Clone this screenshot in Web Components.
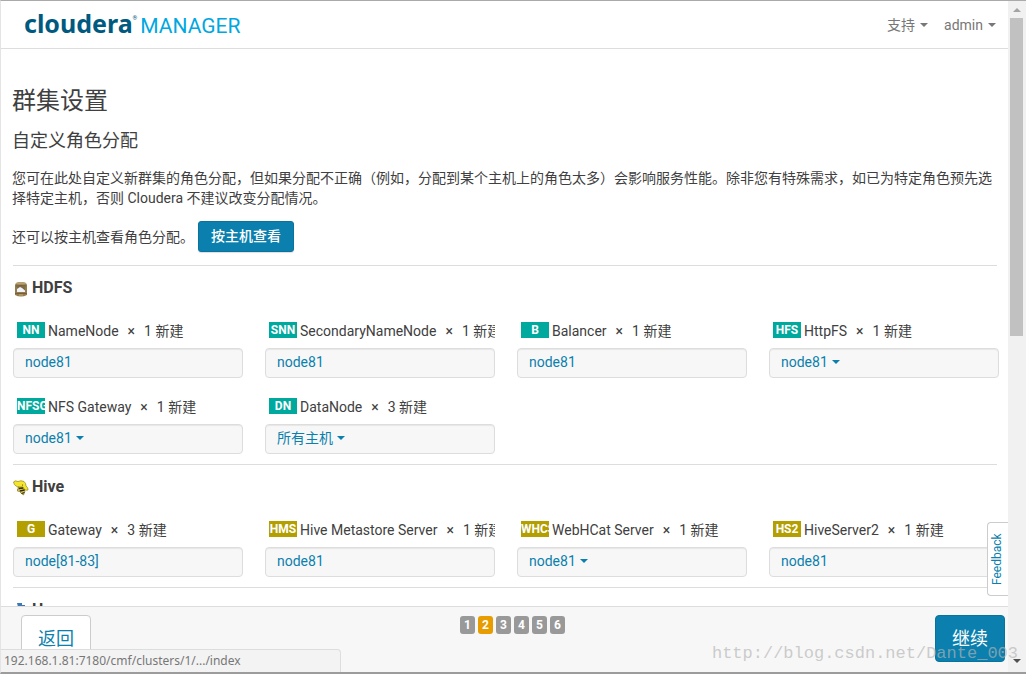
<!DOCTYPE html>
<html lang="zh-CN">
<head>
<meta charset="utf-8">
<title>群集设置 - Cloudera Manager</title>
<style>
  html, body { margin: 0; height: 100%; }
  body { overflow: hidden; font: 14px/20px Roboto, "Noto Sans CJK SC", sans-serif; color: #404040; background: #fff; }
</style>
</head>
<body>
<cm-window>
  <cm-header slot="header"></cm-header>
  <cm-intro></cm-intro>
  <cm-service name="HDFS" icon="hdfs" color="#00a99d">
    <cm-role abbr="NN" name="NameNode" count="1" host="node81"></cm-role>
    <cm-role abbr="SNN" name="SecondaryNameNode" count="1" host="node81"></cm-role>
    <cm-role abbr="B" name="Balancer" count="1" host="node81"></cm-role>
    <cm-role abbr="HFS" name="HttpFS" count="1" host="node81" menu></cm-role>
    <cm-role abbr="NFSG" name="NFS Gateway" count="1" host="node81" menu></cm-role>
    <cm-role abbr="DN" name="DataNode" count="3" host="所有主机" menu></cm-role>
  </cm-service>
  <cm-service name="Hive" icon="hive" color="#b3a000">
    <cm-role abbr="G" name="Gateway" count="3" host="node[81-83]"></cm-role>
    <cm-role abbr="HMS" name="Hive Metastore Server" count="1" host="node81"></cm-role>
    <cm-role abbr="WHCS" name="WebHCat Server" count="1" host="node81" menu></cm-role>
    <cm-role abbr="HS2" name="HiveServer2" count="1" host="node81"></cm-role>
  </cm-service>
  <cm-service name="Hue" icon="hue" color="#4a7fb5"></cm-service>
  <cm-feedback slot="overlay"></cm-feedback>
  <cm-footer slot="footer"></cm-footer>
  <cm-scrollbar slot="scrollbar"></cm-scrollbar>
  <cm-status slot="overlay">192.168.1.81:7180/cmf/clusters/1/.../index</cm-status>
  <cm-watermark slot="overlay">http://blog.csdn.net/Dante_003</cm-watermark>
</cm-window>
<script>
const define = (tag, html) => customElements.define(tag, class extends HTMLElement {
  connectedCallback() {
    if (this.shadowRoot) return;
    const root = this.attachShadow({ mode: 'open' });
    root.innerHTML = typeof html === 'function' ? html(this) : html;
  }
});

define('cm-window', `
<style>
  :host { display: grid; grid-template-columns: minmax(0, 1fr) 18px; height: 100vh; box-sizing: border-box; position: relative;
          border-top: 1px solid #aaa; border-left: 1px solid #e4e4e4; border-bottom: 2px solid #9c9c9c; overflow: hidden; }
  .page { display: flex; flex-direction: column; min-height: 0; }
  main { flex: 1; min-height: 0; overflow: hidden; padding: 0 11px 0 12px; }
</style>
<div class="page"><slot name="header"></slot><main><slot></slot></main><slot name="footer"></slot></div>
<slot name="scrollbar"></slot>
<slot name="overlay"></slot>`);

define('cm-caret', `
<style>:host { display: inline-block; border: 4px solid transparent; border-top-color: currentColor; border-bottom: 0; vertical-align: middle; }</style>`);

define('cm-header', `
<style>
  :host { display: flex; align-items: center; justify-content: space-between; height: 47px; border-bottom: 1px solid #ddd; padding: 0 12px 0 23px; }
  .logo { display: flex; align-items: baseline; text-decoration: none; color: #00a7e1; font: 21px/32px Roboto, sans-serif; }
  .logo b { font: 700 25px/32px "Noto Sans", sans-serif; color: #00597f; }
  .logo small { font-size: 6px; line-height: 6px; align-self: flex-start; margin: 8px 3px 0 0; color: #00597f; }
  nav { display: flex; gap: 16px; }
  button { all: unset; display: flex; align-items: center; gap: 5px; color: #777; cursor: pointer; }
</style>
<a class="logo" href="#"><b>cloudera</b><small>®</small><span>MANAGER</span></a>
<nav><button type="button">支持 <cm-caret></cm-caret></button><button type="button">admin <cm-caret></cm-caret></button></nav>`);

define('cm-intro', `
<style>
  :host { display: block; padding: 36px 0 13px; margin-left: -1px; }
  h1 { margin: 0; font-weight: 400; font-size: 24px; line-height: 32px; }
  h2 { margin: 9px 0 12px; font-weight: 400; font-size: 18px; line-height: 30px; }
  p { margin: 0; }
  .by-host { display: flex; align-items: center; gap: 4px; margin-top: 13px; }
  button { font: inherit; font-weight: 500; line-height: 20px; color: #fff; background: #0b7fad; border: 1px solid #0a739d; border-radius: 3px;
           padding: 4px 12px 5px; box-shadow: 0 1px 1px #0002; cursor: pointer; }
</style>
<h1>群集设置</h1>
<h2>自定义角色分配</h2>
<p>您可在此处自定义新群集的角色分配，但如果分配不正确（例如，分配到某个主机上的角色太多）会影响服务性能。除非您有特殊需求，如已为特定角色预先选择特定主机，否则 Cloudera 不建议改变分配情况。</p>
<div class="by-host"><p>还可以按主机查看角色分配。</p><button type="button">按主机查看</button></div>`);

const icons = {
  hdfs: `<path d="M3 2Q8 0 13 2L14 4V14Q8 17 2 14V4Z" fill="#957b4c"/><path d="M3 2Q8 0 13 2L13 3Q8 4 3 3Z" fill="#b7a074"/>
    <path d="M3 4.500Q8 3.500 13 4.500V5.500H3Z" fill="#75603a"/><path d="M4 6Q8 5 12 6V11H4Z" fill="#7d6a47"/><path d="M4 8L7 6L9 7L12 9.500V11H4Z" fill="#eef3fb"/>
    <path d="M2 12H14V13H2Z" fill="#75603a"/><path d="M6 13.500H10V14.500H6Z" fill="#c0aa7d"/>`,
  hive: `<path d="M.5 2Q2 0 5 1.500Q8 0 11 1.500Q13 3 13 6Q15.500 8 15 10Q13 11 11 9L10 8H7L5 7L3 6Q1 5 .5 2Z" fill="#f5e62c" stroke="#8f8520" stroke-width=".7"/>
    <path d="M5 7H10L12 11L10.500 15L9 14L6 11Z" fill="#e6cf2a" stroke="#4d441c" stroke-width=".5"/>
    <path d="M6 8.500L10 8M7 11L11.500 10M8.500 13.500L11.500 12.500" stroke="#2d2920" stroke-width="1.300"/>
    <path d="M5.500 8Q3 10 5.500 12" stroke="#a38b22" fill="none"/><circle cx="9.500" cy="5" r=".6" fill="#4d441c"/>`,
  hue: `<path d="M4 0H9V2H12V4L15 8L8 14L2 8L5 4Z" fill="#3f78b5"/>`
};

define('cm-service', el => `
<style>
  :host { display: block; border-top: 1px solid #ddd; padding: 12px 0 10px; --badge: ${el.getAttribute('color')}; }
  h3 { display: flex; align-items: center; gap: 3px; margin: 0 0 23px; font-size: 16px; line-height: 20px; font-weight: 700; }
  svg { width: 16px; height: 16px; margin-top: 2px; }
  .roles { display: grid; grid-template-columns: repeat(4, minmax(0, 1fr)); gap: 19px 22px; margin-right: -2px; }
</style>
<h3><svg viewBox="0 0 16 16" aria-hidden="true">${icons[el.getAttribute('icon')]}</svg>${el.getAttribute('name')}</h3>
<div class="roles"><slot></slot></div>`);

define('cm-role', el => {
  const a = n => el.getAttribute(n);
  return `
<style>
  :host { display: block; min-width: 0; }
  .label { display: flex; white-space: nowrap; overflow: hidden; padding-left: 4px; margin-bottom: 7px; }
  .label span { flex: none; }
  .badge { width: 28px; height: 16px; margin: 1px 3px 0 0; background: var(--badge); color: #fff; font-size: 12px; line-height: 16px; font-weight: 700;
           text-align: center; overflow: hidden; }
  .times { margin: 0 9px; }
  .well { box-sizing: border-box; height: 30px; padding: 3px 11px 5px; background: #f7f7f7; border: 1px solid #ddd; border-radius: 4px; box-shadow: inset 0 1px 1px #0001; }
  a, button { all: unset; display: inline-flex; align-items: center; gap: 4px; color: #0b7fad; cursor: pointer; line-height: 20px; }
</style>
<div class="label"><span class="badge">${a('abbr')}</span><span>${a('name')}</span><span class="times">×</span><span>${a('count')} 新建</span></div>
<div class="well">${el.hasAttribute('menu')
    ? `<button type="button" aria-haspopup="true">${a('host')}<cm-caret></cm-caret></button>`
    : `<a href="#">${a('host')}</a>`}</div>`;
});

define('cm-footer', `
<style>
  :host { display: flex; justify-content: space-between; align-items: flex-start; background: #f7f7f7; border-top: 1px solid #ddd; padding: 8px 3px 10px 20px; }
  button { box-sizing: border-box; width: 70px; height: 47px; padding: 0; font: 18px/24px Roboto, "Noto Sans CJK SC", sans-serif; border-radius: 4px; cursor: pointer;
           color: #0b7fad; background: #fff; border: 1px solid #ccc; }
  .next { color: #fff; background: #0b7fad; border-color: #0a739d; }
  ol { display: flex; gap: 3px; list-style: none; margin: 1px 1px 0 0; padding: 0; }
  li { width: 15px; height: 18px; border-radius: 3px; background: #999; color: #fff; font-weight: 700; font-size: 12px; line-height: 18px; text-align: center; }
  li[aria-current] { background: #e79c00; }
</style>
<button type="button">返回</button>
<ol><li>1</li><li aria-current="step">2</li><li>3</li><li>4</li><li>5</li><li>6</li></ol>
<button type="button" class="next">继续</button>`);

define('cm-scrollbar', `
<style>
  :host { display: flex; flex-direction: column; align-items: center; background: #f1f1f1; color: #505050; padding: 7px 2px 9px 2px; box-sizing: border-box; }
  .up { border: 4px solid transparent; border-top: 0; border-bottom-color: #a3a3a3; }
  .track { flex: 1; width: 100%; margin: 6px 0; }
  .thumb { height: 50%; background: #c1c1c1; width: 13px; }
</style>
<span class="up"></span><div class="track"><div class="thumb"></div></div><cm-caret></cm-caret>`);

define('cm-feedback', `
<style>
  :host { position: absolute; right: 18px; bottom: 76px; }
  a { display: block; box-sizing: border-box; width: 21px; height: 74px; writing-mode: vertical-rl; rotate: 180deg; text-align: center; font-size: 12px; line-height: 18px;
      color: #0b7fad; text-decoration: none; background: #fff; border: 1px solid #ccc; border-left: 0; border-radius: 0 4px 4px 0; }
</style>
<a href="#">Feedback</a>`);

define('cm-status', `
<style>
  :host { position: absolute; left: -1px; bottom: 0; width: 341px; box-sizing: border-box; padding: 1px 4px; font: 12px/20px "Noto Sans", sans-serif;
          color: #777; background: #f3f3f3; border: 1px solid #ddd; border-width: 1px 1px 0 0; border-top-right-radius: 4px; }
</style>
<slot></slot>`);

define('cm-watermark', `
<style>
  :host { position: absolute; right: 8px; bottom: 6px; font: 17px/24px "Liberation Mono", monospace; color: #b4b4b4aa; pointer-events: none; }
</style>
<slot></slot>`);
</script>
</body>
</html>
